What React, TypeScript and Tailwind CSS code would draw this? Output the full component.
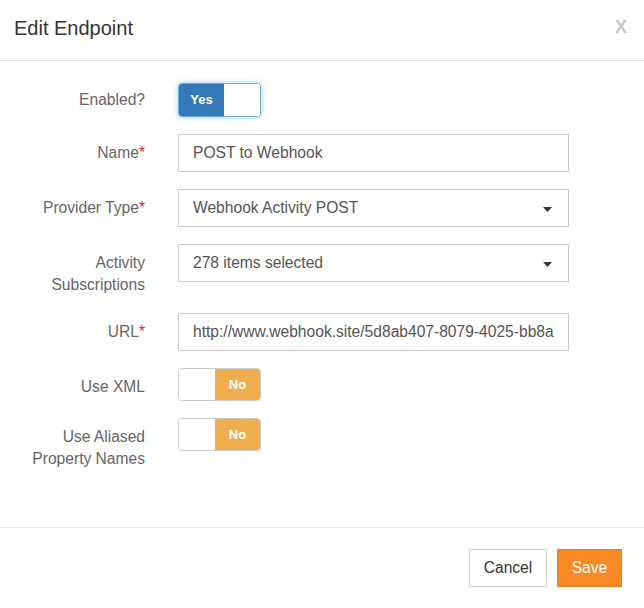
import React from "react";

const font = { fontFamily: '"Liberation Sans", Arial, sans-serif' };

function Label({ children, req, pt = "pt-[8px]" }: { children: React.ReactNode; req?: boolean; pt?: string }) {
  return (
    <div className={`w-[145px] shrink-0 text-right text-[15.6px] leading-[22px] text-[#666] ${pt}`}>
      {children}
      {req && <span className="text-[#e02424]">*</span>}
    </div>
  );
}

function Caret() {
  return (
    <svg width="9" height="5" viewBox="0 0 9 5" className="absolute right-[16px] top-[17px]">
      <path d="M0 0 L9 0 L4.5 5 Z" fill="#333" />
    </svg>
  );
}

function Field({ value, select }: { value: string; select?: boolean }) {
  return (
    <div className="relative flex h-[38px] w-[391px] items-center overflow-hidden whitespace-nowrap border border-[#ccc] bg-white pl-[14px] text-[15.6px] text-[#555]">
      {value}
      {select && <Caret />}
    </div>
  );
}

function NoToggle() {
  return (
    <div className="flex h-[33px] w-[83px] overflow-hidden rounded-[4px] border border-[#ccc] bg-white">
      <div className="w-[36px] bg-white" />
      <div className="flex flex-1 items-center justify-center bg-[#f0ad4e] text-[13px] font-bold text-white">No</div>
    </div>
  );
}

export default function App() {
  return (
    <div style={font} className="h-[608px] w-[644px] bg-white">
      <div className="relative h-[61px] border-b border-[#e5e5e5] pl-[14px] pt-[16px]">
        <div className="text-[20px] leading-[24px] text-[#333]">Edit Endpoint</div>
        <div className="absolute right-[17px] top-[15px] text-[18px] font-bold leading-[24px] text-[#c9c9c9]">X</div>
      </div>

      <div className="flex h-[467px] flex-col gap-[17px] border-b border-[#e5e5e5] pt-[22px]">
        <div className="flex gap-[33px]">
          <Label pt="pt-[6px]">Enabled?</Label>
          <div className="flex h-[34px] w-[83px] overflow-hidden rounded-[4px] border border-[#66afe9] bg-white shadow-[0_0_6px_rgba(102,175,233,0.6)]">
            <div className="flex w-[45px] items-center justify-center bg-[#337ab7] text-[13px] font-bold text-white">Yes</div>
            <div className="flex-1 bg-white" />
          </div>
        </div>
        <div className="flex gap-[33px]">
          <Label req>Name</Label>
          <Field value="POST to Webhook" />
        </div>
        <div className="flex gap-[33px]">
          <Label req>Provider Type</Label>
          <Field value="Webhook Activity POST" select />
        </div>
        <div className="flex gap-[33px]">
          <Label>
            Activity
            <br />
            Subscriptions
          </Label>
          <Field value="278 items selected" select />
        </div>
        <div className="flex gap-[33px]">
          <Label req>URL</Label>
          <Field value="http://www.webhook.site/5d8ab407-8079-4025-bb8a" />
        </div>
        <div className="flex gap-[33px]">
          <Label>Use XML</Label>
          <NoToggle />
        </div>
        <div className="flex gap-[33px]">
          <Label>
            Use Aliased
            <br />
            Property Names
          </Label>
          <NoToggle />
        </div>
      </div>

      <div className="flex justify-end gap-[10px] pr-[22px] pt-[21px]">
        <button className="h-[38px] w-[78px] border border-[#ccc] bg-white text-[15.6px] text-[#333]">Cancel</button>
        <button className="h-[38px] w-[65px] border border-[#e57f1f] bg-[#f78a25] text-[15.6px] text-white">Save</button>
      </div>
    </div>
  );
}
